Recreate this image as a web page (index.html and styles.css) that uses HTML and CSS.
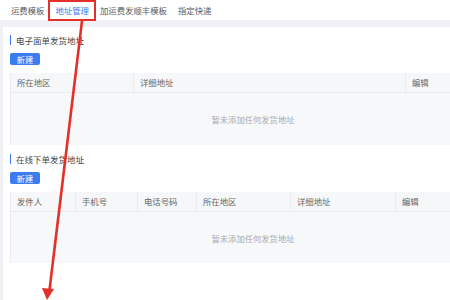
FILE: index.html
```html
<!DOCTYPE html>
<html lang="zh">
  <head>
    <meta charset="UTF-8">
    <title>地址管理</title>
    <link rel="stylesheet" href="styles.css">
  </head>
  <body>
    <div class="tabs">
        <div class="tab">运费模板</div>
        <div class="tab active">地址管理</div>
        <div class="tab">加运费发顺丰模板</div>
        <div class="tab">指定快递</div>
    </div>

    <div class="panel">
        <div class="section-title">电子面单发货地址</div>
        <button class="btn">新建</button>
        <div class="table">
            <div class="thead cols-3">
                <div class="th">所在地区</div>
                <div class="th">详细地址</div>
                <div class="th">编辑</div>
            </div>
            <div class="tbody first">暂未添加任何发货地址</div>
        </div>

        <div class="section-title">在线下单发货地址</div>
        <button class="btn">新建</button>
        <div class="table">
            <div class="thead cols-6">
                <div class="th">发件人</div>
                <div class="th">手机号</div>
                <div class="th">电话号码</div>
                <div class="th">所在地区</div>
                <div class="th">详细地址</div>
                <div class="th">编辑</div>
            </div>
            <div class="tbody">暂未添加任何发货地址</div>
        </div>
    </div>

    <svg class="annotation" width="450" height="300" viewBox="0 0 450 300">
        <rect x="49" y="1" width="46" height="19" fill="none" stroke="#e3302b" stroke-width="2"/>
        <line x1="82" y1="21" x2="49.5" y2="290" stroke="#e3302b" stroke-width="2.6" stroke-linecap="round"/>
        <polygon points="47,300 42,288 54,289" fill="#e3302b"/>
    </svg>
  </body>
</html>
```

FILE: styles.css
```css
:root {
    --blue: #3b7cf0;
    --text: #5a5a5a;
    --text-muted: #aaa;
    --border: #eaecf0;
    --bg-gray: #f0f1f5;
    --head-bg: #f6f7f9;
    --body-bg: #f7f8fa;
}

body {
    margin: 0;
    width: 450px;
    height: 300px;
    overflow: hidden;
    position: relative;
    background: var(--bg-gray);
    font-family: "Noto Sans CJK SC", "Noto Sans", sans-serif;
    font-size: 8.4px;
    color: var(--text);
}

.tabs {
    display: flex;
    height: 20px;
    align-items: center;
    background: #fff;
    padding-left: 5.5px;
}

.tab {
    padding: 0 5.5px;
    line-height: 20px;
}

.tab.active {
    color: var(--blue);
}

/* the page is wider than the window, so the tables are clipped on the right */
.panel {
    margin: 7px 0 0 3px;
    height: 273px;
    box-sizing: border-box;
    overflow: hidden;
    background: #fff;
    padding: 8px 0 0 7px;
}

.section-title {
    height: 10px;
    line-height: 10px;
    padding-left: 5px;
    border-left: 1.5px solid var(--blue);
    font-size: 8.5px;
    color: #444;
}

.btn {
    display: block;
    margin-top: 8px;
    width: 30px;
    height: 12px;
    padding: 0;
    border: none;
    border-radius: 2px;
    background: var(--blue);
    color: #fff;
    font-family: inherit;
    font-size: 8.2px;
    line-height: 12px;
}

.table {
    margin-top: 8px;
    width: 484px;
    border-left: 1px solid var(--border);
}

.thead {
    display: grid;
    height: 19px;
    background: var(--head-bg);
    border-bottom: 1px solid var(--border);
}

.cols-3 {
    grid-template-columns: 123px 272px 1fr;
}

.cols-6 {
    grid-template-columns: 65px 62px 59px 94px 105px 1fr;
}

.th {
    padding-left: 6px;
    line-height: 19px;
    border-right: 1px solid var(--border);
    color: #666;
}

.th:last-child {
    border-right: none;
}

.tbody {
    display: flex;
    align-items: center;
    justify-content: center;
    height: 51px;
    background: var(--body-bg);
    color: var(--text-muted);
    font-size: 8.3px;
}

.tbody.first {
    height: 52px;
    margin-bottom: 9px;
}

.annotation {
    position: absolute;
    top: 0;
    left: 0;
    pointer-events: none;
}
```
